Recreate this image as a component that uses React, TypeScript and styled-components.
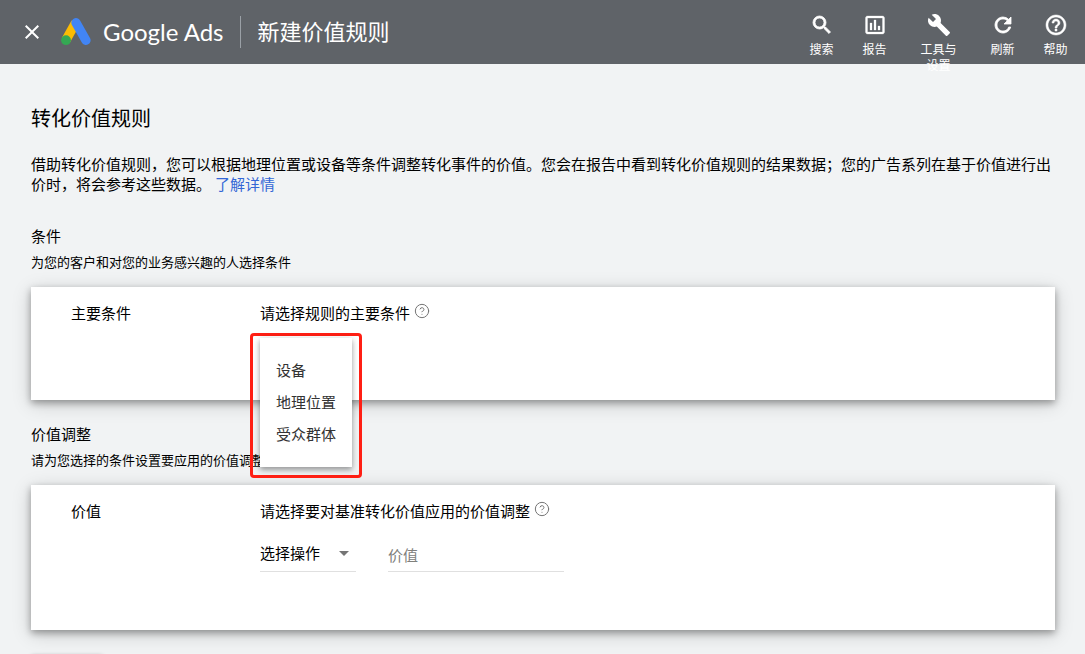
import React from 'react';
import styled, { createGlobalStyle } from 'styled-components';
import {
  MdArrowDropDown,
  MdBuild,
  MdClose,
  MdHelpOutline,
  MdInsertChartOutlined,
  MdRefresh,
  MdSearch,
} from 'react-icons/md';
import { CircleHelp } from 'lucide-react';

const GlobalStyle = createGlobalStyle`
  *, *::before, *::after { box-sizing: border-box; }
  body {
    margin: 0;
    background: #f1f3f4;
    color: #000;
    font-family: "Noto Sans CJK SC", "Noto Sans", sans-serif;
    font-size: 15px;
    line-height: 20px;
  }
  button, input, select { font: inherit; color: inherit; }
  h1, h2, h3, p { margin: 0; font-weight: 400; }
`;

const Header = styled.header`
  display: flex;
  align-items: center;
  height: 64px;
  padding: 0 3px 0 20px;
  background: #5f6368;
  color: #fff;
`;

const CloseButton = styled.button`
  display: flex;
  padding: 0;
  border: 0;
  background: none;
  cursor: pointer;
`;

const Brand = styled.a`
  display: flex;
  align-items: center;
  gap: 12px;
  margin-left: 17px;
  color: #fff;
  font-family: Lato, sans-serif;
  font-size: 24px;
  line-height: 32px;
  text-decoration: none;
  white-space: nowrap;
`;

const HeaderTitle = styled.h1`
  margin-left: 16px;
  padding: 0 0 4px 17px;
  border-left: 1px solid #9aa0a6;
  font-size: 22px;
  line-height: 28px;
  white-space: nowrap;
`;

const Tools = styled.nav`
  display: flex;
  align-self: flex-start;
  margin-left: auto;
  padding-top: 13px;
`;

const ToolButton = styled.button<{ $wide?: boolean; $weight?: number }>`
  display: flex;
  flex-direction: column;
  align-items: center;
  justify-content: flex-start;
  gap: 4px;
  width: ${({ $wide }) => ($wide ? 75 : 53)}px;
  height: 60px;
  padding: 0 ${({ $wide }) => ($wide ? 18 : 4)}px;
  border: 0;
  background: none;
  font-size: 12px;
  line-height: 16px;
  cursor: pointer;

  path:not([fill='none']) {
    stroke: currentColor;
    stroke-width: ${({ $weight = 0 }) => $weight};
  }
`;

const Main = styled.main`
  padding: 40px 30px 0 31px;
`;

const PageTitle = styled.h2`
  margin-bottom: 22px;
  font-size: 20px;
  line-height: 28px;
`;

const Link = styled.a`
  margin-left: 4px;
  color: #3367d6;
  text-decoration: none;
`;

const Section = styled.section`
  margin-top: 30px;

  & + & {
    margin-top: 22px;
  }
`;

const SectionTitle = styled.h3`
  margin-bottom: 4px;
  font-size: 15px;
  line-height: 24px;
`;

const SectionHint = styled.p`
  margin-bottom: 15px;
  font-size: 13px;
`;

const Card = styled.div<{ $minHeight: number }>`
  display: grid;
  grid-template-columns: 189px 1fr;
  align-items: start;
  min-height: ${({ $minHeight }) => $minHeight}px;
  padding: 16px 40px;
  background: #fff;
  box-shadow: 0 3px 7px rgba(0, 0, 0, 0.33), 0 4px 18px rgba(0, 0, 0, 0.18);
`;

const Field = styled.div`
  position: relative;
`;

const Question = styled.div`
  display: flex;
  gap: 4px;

  svg {
    color: #757575;
  }
`;

const MenuFrame = styled.div`
  position: absolute;
  z-index: 1;
  top: 30px;
  left: -10px;
  padding: 2px 7px 8px;
  border: 3px solid #ff1f14;
  border-radius: 4px;
`;

const Menu = styled.div`
  display: flex;
  flex-direction: column;
  padding: 16px 0 17px;
  background: #fff;
  box-shadow: 0 3px 5px rgba(0, 0, 0, 0.3), 0 1px 8px rgba(0, 0, 0, 0.12);
`;

const MenuItem = styled.button`
  height: 32px;
  padding: 0 16px;
  border: 0;
  background: none;
  color: #333;
  text-align: left;
  cursor: pointer;
`;

const Controls = styled.div`
  display: flex;
  gap: 32px;
  margin-top: 14px;
`;

const SelectBox = styled.div`
  display: grid;
  align-items: center;
  width: 96px;
  height: 37px;
  border-bottom: 1px solid #e0e0e0;

  > * {
    grid-area: 1 / 1;
  }

  svg {
    justify-self: end;
    color: #757575;
    pointer-events: none;
  }
`;

const Select = styled.select`
  width: 100%;
  height: 36px;
  padding: 0;
  border: 0;
  background: none;
  appearance: none;
`;

const ValueInput = styled.input`
  width: 176px;
  height: 37px;
  padding: 3px 0 0;
  border: 0;
  border-bottom: 1px solid #e0e0e0;
  background: none;

  &::placeholder {
    color: #80807c;
    opacity: 1;
  }
`;

const SaveButton = styled.button`
  display: block;
  width: 72px;
  height: 36px;
  margin-top: 25px;
  border: 0;
  border-radius: 2px;
  background: #e0e0e0;
  box-shadow: 0 1px 4px rgba(0, 0, 0, 0.4);
`;

const AdsLogo = () => (
  <svg width="30" height="28" viewBox="0 0 30 28" aria-hidden="true">
    <path d="M14.6 4.8 5 22" stroke="#fbbc04" strokeWidth="9.4" />
    <path d="M15 4.8 24.9 22.2" stroke="#4285f4" strokeWidth="9.4" strokeLinecap="round" />
    <circle cx="5" cy="22.2" r="4.9" fill="#34a853" />
  </svg>
);

const HelpMark = () => <CircleHelp size={16} strokeWidth={1.5} aria-hidden="true" />;

const tools = [
  { label: '搜索', Icon: MdSearch, weight: 0.8 },
  { label: '报告', Icon: MdInsertChartOutlined, weight: 0.3 },
  { label: '工具与设置', Icon: MdBuild, wide: true },
  { label: '刷新', Icon: MdRefresh, weight: 0.8 },
  { label: '帮助', Icon: MdHelpOutline, weight: 0.5 },
];

const conditions = ['设备', '地理位置', '受众群体'];

export default function App() {
  return (
    <>
      <GlobalStyle />
      <Header>
        <CloseButton type="button" aria-label="关闭">
          <MdClose size={24} />
        </CloseButton>
        <Brand href="#">
          <AdsLogo />
          Google Ads
        </Brand>
        <HeaderTitle>新建价值规则</HeaderTitle>
        <Tools>
          {tools.map(({ label, Icon, wide, weight }) => (
            <ToolButton key={label} type="button" $wide={wide} $weight={weight}>
              <Icon size={24} />
              <span>{label}</span>
            </ToolButton>
          ))}
        </Tools>
      </Header>
      <Main>
        <PageTitle>转化价值规则</PageTitle>
        <p>
          借助转化价值规则，您可以根据地理位置或设备等条件调整转化事件的价值。您会在报告中看到转化价值规则的结果数据；您的广告系列在基于价值进行出价时，将会参考这些数据。
          <Link href="#">了解详情</Link>
        </p>

        <Section>
          <SectionTitle>条件</SectionTitle>
          <SectionHint>为您的客户和对您的业务感兴趣的人选择条件</SectionHint>
          <Card $minHeight={113}>
            <div>主要条件</div>
            <Field>
              <Question>
                <span id="condition-label">请选择规则的主要条件</span>
                <HelpMark />
              </Question>
              <MenuFrame>
                <Menu role="menu" aria-labelledby="condition-label">
                  {conditions.map((name) => (
                    <MenuItem key={name} type="button" role="menuitem">
                      {name}
                    </MenuItem>
                  ))}
                </Menu>
              </MenuFrame>
            </Field>
          </Card>
        </Section>

        <Section>
          <SectionTitle>价值调整</SectionTitle>
          <SectionHint>请为您选择的条件设置要应用的价值调整</SectionHint>
          <Card $minHeight={145}>
            <div>价值</div>
            <Field>
              <Question>
                <label htmlFor="operation">请选择要对基准转化价值应用的价值调整</label>
                <HelpMark />
              </Question>
              <Controls>
                <SelectBox>
                  <Select id="operation">
                    <option>选择操作</option>
                  </Select>
                  <MdArrowDropDown size={24} />
                </SelectBox>
                <ValueInput type="text" aria-label="价值" placeholder="价值" />
              </Controls>
            </Field>
          </Card>
        </Section>
        <SaveButton type="button" aria-label="保存" />
      </Main>
    </>
  );
}
